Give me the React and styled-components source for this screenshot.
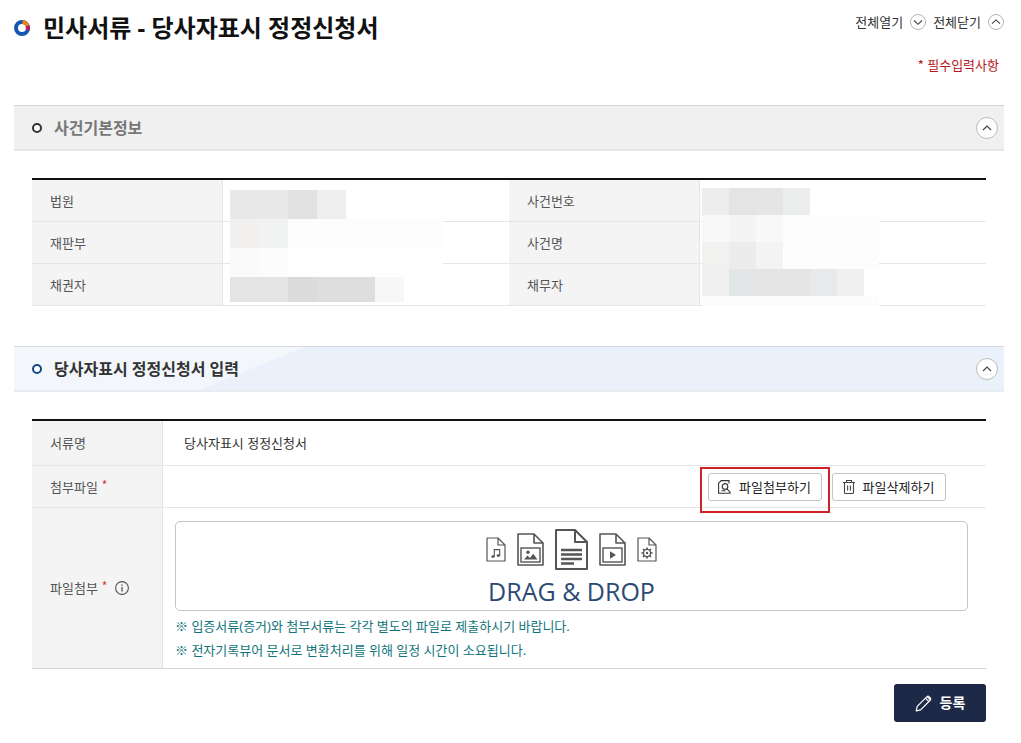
import React, { useState } from 'react';
import styled, { createGlobalStyle } from 'styled-components';

const GlobalStyle = createGlobalStyle`
    * {
        box-sizing: border-box;
    }
    body {
        margin: 0;
        background-color: #ffffff;
    }
    body, button {
        font-family: 'Noto Sans', 'Noto Sans CJK KR', sans-serif;
        font-size: 13px;
        line-height: 20px;
        color: #333333;
    }
    button {
        padding: 0;
        cursor: pointer;
    }
    svg {
        display: block;
        flex-shrink: 0;
    }
`

const Page = styled.div`
    padding: 12px 17px 20px 14px;
`
const Header = styled.header`
    display: flex;
    justify-content: space-between;
    align-items: flex-start;
    padding-bottom: 29px;
`
const Title = styled.h1`
    display: flex;
    align-items: center;
    gap: 12px;
    margin: 0;
    font-size: 24px;
    line-height: 32px;
    font-weight: 700;
    color: #111111;
`
const HeaderSide = styled.div`
    display: flex;
    flex-direction: column;
    align-items: flex-end;
    gap: 22px;
`
const ToggleAll = styled.div`
    display: flex;
    gap: 7px;
`
const TextButton = styled.button`
    display: flex;
    align-items: center;
    gap: 7px;
    border: none;
    background: none;
`
const Required = styled.p`
    margin: 0;
    padding-right: 5px;
    line-height: 22px;
    color: #b9151b;
`
const Mark = styled.span`
    font-family: 'Noto Sans CJK KR', sans-serif;
`
const Star = styled(Mark)`
    align-self: flex-start;
    margin-left: 4px;
    font-size: 12px;
    line-height: 16px;
    color: #d0383c;
`

const Section = styled.section`
    margin-bottom: ${props => props.$last ? '15px' : '40px'};
`
const Bar = styled.div`
    display: flex;
    align-items: center;
    height: 46px;
    padding: 0 6px 0 18px;
    border-top: 1px solid ${props => props.$active ? '#d3dae2' : '#d2d2d2'};
    border-bottom: 2px solid ${props => props.$active ? '#e9ecf1' : '#e6e6e6'};
    background: ${props => props.$active
        ? 'linear-gradient(158deg, #f3f7fc 108px, #eaf1fa 110px)'
        : '#f0f0f0'};
`
const BarTitle = styled.h2`
    flex: 1;
    margin: 0 0 0 12px;
    font-size: 16px;
    line-height: 24px;
    font-weight: 700;
    color: ${props => props.$active ? '#333333' : '#777777'};
`
const Dot = styled.span`
    width: 10px;
    height: 10px;
    border: 2px solid ${props => props.$active ? '#124a86' : '#333333'};
    border-radius: 50%;
    background-color: #ffffff;
`
const RoundButton = styled.button`
    display: flex;
    align-items: center;
    justify-content: center;
    width: 22px;
    height: 22px;
    border: 1px solid #bcbcbc;
    border-radius: 50%;
    background-color: #ffffff;
`
const SectionBody = styled.div`
    padding: 27px 18px 0;
`

const Table = styled.table`
    width: 100%;
    table-layout: fixed;
    border-collapse: separate;
    border-spacing: 0;
    border-top: 2px solid #111111;

    tr:last-child > * {
        border-bottom-color: ${props => props.$strong ? '#d4d4d4' : '#e6e6e6'};
    }
`
const Col = styled.col`
    width: ${props => props.$width};
`
const Label = styled.th`
    height: ${props => props.$height || 42}px;
    padding: 0 0 0 18px;
    border-right: 1px solid #e4e4e4;
    border-bottom: 1px solid #e6e6e6;
    background-color: #f4f4f4;
    font-weight: 400;
    text-align: left;
    color: #555555;
`
const LabelInner = styled.div`
    display: flex;
    align-items: center;

    svg {
        margin-left: 8px;
    }
`
const Value = styled.td`
    position: relative;
    padding: 0 0 0 21px;
    border-bottom: 1px solid #e6e6e6;
`
const DropCell = styled(Value)`
    padding: 13px 18px 6px 12px;
`

/* pixelated cover over private case data */
const Mosaic = styled.div`
    position: absolute;
    z-index: 1;
    top: ${props => props.$top}px;
    left: ${props => props.$left}px;
`
const MosaicRow = styled.div`
    display: flex;
    height: ${props => props.$height}px;
`
const Block = styled.span`
    width: ${props => props.$width}px;
    background-color: ${props => props.$color};
`

const Buttons = styled.div`
    display: flex;
    justify-content: flex-end;
    gap: 10px;
    padding-right: 40px;
`
const Highlight = styled.div`
    position: relative;

    &::after {
        content: '';
        position: absolute;
        z-index: 2;
        inset: -6px -8px -12px;
        border: 2px solid #cf2229;
        pointer-events: none;
    }
`
const FileButton = styled.button`
    display: flex;
    align-items: center;
    justify-content: center;
    gap: 7px;
    width: 114px;
    height: 28px;
    padding-right: 2px;
    border: 1px solid #c3c3c9;
    border-radius: 3px;
    background-color: #ffffff;
    color: #222222;
`
const DropZone = styled.button`
    display: flex;
    flex-direction: column;
    align-items: center;
    width: 100%;
    height: 90px;
    padding-top: 7px;
    margin-bottom: 3px;
    border: 1px solid #c4c4c4;
    border-radius: 5px;
    background-color: #ffffff;
`
const Files = styled.span`
    display: flex;
    align-items: center;
    gap: 11px;
`
const DropText = styled.span`
    margin-top: 4px;
    font-family: 'Open Sans', 'Noto Sans', sans-serif;
    font-size: 25px;
    line-height: 34px;
    color: #2c4a75;
`
const Note = styled.p`
    margin: 0;
    line-height: 24px;
    color: #12757c;
`
const Footer = styled.div`
    display: flex;
    justify-content: flex-end;
    padding: 0 18px;
`
const Submit = styled.button`
    display: flex;
    align-items: center;
    justify-content: center;
    gap: 8px;
    width: 92px;
    height: 38px;
    border: none;
    border-radius: 3px;
    background-color: #1e2948;
    font-size: 14px;
    font-weight: 700;
    color: #ffffff;
`

const caseMosaic = [
    [29, [[58, '#e8e8e8'], [29, '#e1e1e1'], [29, '#eeeeee']]],
    [29, [[29, '#f1f0ef'], [29, '#f1f3f3'], [155, '#fdfdfd']]],
    [29, [[29, '#fafafa'], [29, '#fcfcfc'], [155, '#fefefe']]],
    [25, [[58, '#e4e4e4'], [29, '#dbdbdb'], [58, '#dedede'], [29, '#f7f7f7']]],
]
const nameMosaic = [
    [27, [[27, '#ededed'], [27, '#e4e4e4'], [27, '#e5e5e5'], [27, '#eceeee']]],
    [27, [[27, '#f8f8f8'], [27, '#f4f4f4'], [27, '#f8f8f8'], [96, '#fdfdfd']]],
    [27, [[27, '#f1f1ef'], [27, '#ececec'], [27, '#f3f3f3'], [96, '#fdfdfd']]],
    [27, [[27, '#f0f0f0'], [27, '#e3e6e7'], [54, '#e4e4e4'], [27, '#e7eaec'], [27, '#f0f0f0']]],
    [10, [[177, '#fcfcfc']]],
]

const Cover = ({ rows, top, left }) => (
    <Mosaic $top={top} $left={left} aria-hidden="true">
        {rows.map(([height, blocks], i) => (
            <MosaicRow key={i} $height={height}>
                {blocks.map(([width, color], j) => (
                    <Block key={j} $width={width} $color={color} />
                ))}
            </MosaicRow>
        ))}
    </Mosaic>
)

const TitleMark = () => (
    <svg width="17" height="16" viewBox="0 0 17 16" fill="none" strokeWidth="4">
        <circle cx="8" cy="8" r="6" stroke="#1557b0" />
        <path d="M8.5 2A6 6 0 0 1 13.6 6" stroke="#e8861b" />
        <path d="M13.6 6A6 6 0 0 1 13.6 10" stroke="#c4145c" />
    </svg>
)

const CircleArrow = ({ down }) => (
    <svg width="16" height="16" viewBox="0 0 16 16" fill="none">
        <circle cx="8" cy="8" r="7.5" stroke="#b5b5b5" />
        <path d={down ? 'M4 6.5L8 10.3L12 6.5' : 'M4 9.7L8 5.9L12 9.7'} stroke="#444" strokeWidth="1.1" />
    </svg>
)

const Chevron = ({ open }) => (
    <svg width="10" height="8" viewBox="0 0 10 8" fill="none" stroke="#444" strokeWidth="1.2">
        <path d={open ? 'M1 6L5 2L9 6' : 'M1 2L5 6L9 2'} />
    </svg>
)

const InfoIcon = () => (
    <svg width="14" height="14" viewBox="0 0 14 14" fill="none" stroke="#555">
        <circle cx="7" cy="7" r="6.4" strokeWidth="1.1" />
        <path d="M7 6V10.5M7 3.4V4.7" strokeWidth="1.3" />
    </svg>
)

const SearchFileIcon = () => (
    <svg width="15" height="16" viewBox="0 0 15 16" fill="none" stroke="#333" strokeWidth="1.1">
        <path d="M12 4.5V1.6H4.2L1.6 4.2V14.2H8.5" />
        <circle cx="8" cy="7.4" r="2.8" />
        <path d="M4.5 11.7H8.5M9.8 9.6L13.4 13.6M8.5 14.2H13.6" />
    </svg>
)

const TrashIcon = () => (
    <svg width="14" height="16" viewBox="0 0 14 16" fill="none" stroke="#444" strokeWidth="1.1">
        <path d="M1 3.5H13M4.5 3.5V1.5H9.5V3.5M2.5 3.5V13.5Q2.5 14.5 3.5 14.5H10.5Q11.5 14.5 11.5 13.5V3.5M5.6 6.5V11.5M8.4 6.5V11.5" />
    </svg>
)

const PencilIcon = () => (
    <svg width="17" height="17" viewBox="0 0 17 17" fill="none" stroke="#fff" strokeWidth="1.2" strokeLinejoin="round">
        <path d="M1.2 15.8L2.2 11.4L12 1.6Q13 .8 14 1.6L15.4 3Q16.2 4 15.4 5L5.6 14.8ZM10.4 3.2L13.8 6.6M12 1.6L15.4 5" />
    </svg>
)

const FileShape = ({ width, height, fold, line, children }) => (
    <svg width={width} height={height} viewBox={`0 0 ${width} ${height}`} fill="none" stroke="#555" strokeWidth={line}>
        <path
            strokeLinejoin="round"
            d={`M1 1H${width - fold - 1}L${width - 1} ${fold + 1}V${height - 1}H1ZM${width - fold - 1} 1V${fold + 1}H${width - 1}`}
        />
        {children}
    </svg>
)

const PictureFrame = ({ children }) => (
    <>
        <rect x="4" y="15" width="19" height="14" strokeWidth="1.4" />
        {children}
    </>
)

const FileIcons = () => (
    <Files>
        <FileShape width={20} height={25} fold={7} line={1.2}>
            <path d="M8.3 19.5V12.6H13.7V18.5" strokeWidth="1.1" />
            <ellipse cx="7" cy="19.6" rx="1.7" ry="1.3" fill="#555" stroke="none" />
            <ellipse cx="12.4" cy="18.6" rx="1.7" ry="1.3" fill="#555" stroke="none" />
        </FileShape>
        <FileShape width={27} height={33} fold={9} line={1.6}>
            <PictureFrame>
                <circle cx="11" cy="19.2" r="1.7" fill="#555" stroke="none" />
                <path d="M7 26.5L10.5 22.5L13 25L16.2 20.8L20.5 26.5Z" fill="#555" stroke="none" />
            </PictureFrame>
        </FileShape>
        <FileShape width={33} height={41} fold={12} line={2}>
            <path d="M6 21H27M6 25.5H27M6 30H27M6 34.5H19" strokeWidth="2.4" />
        </FileShape>
        <FileShape width={27} height={33} fold={9} line={1.6}>
            <PictureFrame>
                <path d="M11 18.2L17 22L11 25.8Z" fill="#555" stroke="none" />
            </PictureFrame>
        </FileShape>
        <FileShape width={20} height={25} fold={7} line={1.2}>
            <circle cx="10" cy="16" r="3.6" strokeWidth="1.4" />
            <circle cx="10" cy="16" r="1.2" fill="#555" stroke="none" />
            <path d="M10 10.4V12.4M10 19.6V21.6M4.4 16H6.4M13.6 16H15.6M6 12L7.5 13.5M12.5 18.5L14 20M6 20L7.5 18.5M12.5 13.5L14 12" strokeWidth="1.6" />
        </FileShape>
    </Files>
)

const Panel = ({ title, active, last, open, onToggle, children }) => (
    <Section $last={last}>
        <Bar $active={active}>
            <Dot $active={active} />
            <BarTitle $active={active}>{title}</BarTitle>
            <RoundButton type="button" aria-label={title} aria-expanded={open} onClick={onToggle}>
                <Chevron open={open} />
            </RoundButton>
        </Bar>
        {open && <SectionBody>{children}</SectionBody>}
    </Section>
)

const App = () => {
    const [open, setOpen] = useState({ info: true, form: true })

    const toggle = key => setOpen({ ...open, [key]: !open[key] })
    const toggleAll = value => setOpen({ info: value, form: value })

    return (
        <>
            <GlobalStyle />
            <Page>
                <Header>
                    <Title><TitleMark />민사서류 - 당사자표시 정정신청서</Title>
                    <HeaderSide>
                        <ToggleAll>
                            <TextButton type="button" onClick={() => toggleAll(true)}>
                                전체열기 <CircleArrow down />
                            </TextButton>
                            <TextButton type="button" onClick={() => toggleAll(false)}>
                                전체닫기 <CircleArrow />
                            </TextButton>
                        </ToggleAll>
                        <Required><Mark>*</Mark> 필수입력사항</Required>
                    </HeaderSide>
                </Header>

                <Panel title="사건기본정보" open={open.info} onToggle={() => toggle('info')}>
                    <Table>
                        <colgroup>
                            <Col $width="20%" />
                            <Col $width="30%" />
                            <Col $width="20%" />
                            <Col $width="30%" />
                        </colgroup>
                        <tbody>
                            <tr>
                                <Label scope="row">법원</Label>
                                <Value><Cover rows={caseMosaic} top={10} left={7} /></Value>
                                <Label scope="row">사건번호</Label>
                                <Value><Cover rows={nameMosaic} top={8} left={2} /></Value>
                            </tr>
                            <tr>
                                <Label scope="row">재판부</Label>
                                <Value />
                                <Label scope="row">사건명</Label>
                                <Value />
                            </tr>
                            <tr>
                                <Label scope="row">채권자</Label>
                                <Value />
                                <Label scope="row">채무자</Label>
                                <Value />
                            </tr>
                        </tbody>
                    </Table>
                </Panel>

                <Panel title="당사자표시 정정신청서 입력" active last open={open.form} onToggle={() => toggle('form')}>
                    <Table $strong>
                        <colgroup>
                            <Col $width="131px" />
                            <Col />
                        </colgroup>
                        <tbody>
                            <tr>
                                <Label scope="row" $height={45}>서류명</Label>
                                <Value>당사자표시 정정신청서</Value>
                            </tr>
                            <tr>
                                <Label scope="row">
                                    <LabelInner>첨부파일<Star>*</Star></LabelInner>
                                </Label>
                                <Value>
                                    <Buttons>
                                        <Highlight>
                                            <FileButton type="button"><SearchFileIcon />파일첨부하기</FileButton>
                                        </Highlight>
                                        <FileButton type="button"><TrashIcon />파일삭제하기</FileButton>
                                    </Buttons>
                                </Value>
                            </tr>
                            <tr>
                                <Label scope="row">
                                    <LabelInner>파일첨부<Star>*</Star><InfoIcon /></LabelInner>
                                </Label>
                                <DropCell>
                                    <DropZone type="button">
                                        <FileIcons />
                                        <DropText>DRAG &amp; DROP</DropText>
                                    </DropZone>
                                    <Note><Mark>※</Mark> 입증서류(증거)와 첨부서류는 각각 별도의 파일로 제출하시기 바랍니다.</Note>
                                    <Note><Mark>※</Mark> 전자기록뷰어 문서로 변환처리를 위해 일정 시간이 소요됩니다.</Note>
                                </DropCell>
                            </tr>
                        </tbody>
                    </Table>
                </Panel>

                <Footer>
                    <Submit type="button"><PencilIcon />등록</Submit>
                </Footer>
            </Page>
        </>
    )
}

export default App;
